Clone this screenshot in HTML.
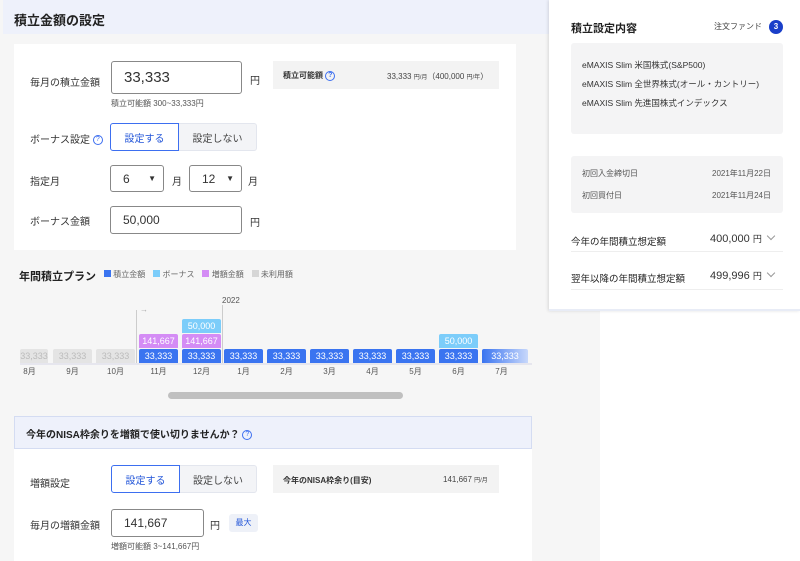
<!DOCTYPE html>
<html><head><meta charset="utf-8"><style>
*{box-sizing:border-box;margin:0;padding:0}
body{width:800px;height:561px;overflow:hidden;background:#fff;font-family:"Liberation Sans","Noto Sans CJK JP",sans-serif;color:#333;position:relative}
.abs{position:absolute}
.gray{left:0;top:0;width:600px;height:561px;background:#f6f6f6}
.hdr{left:3px;top:0;width:597px;height:34px;background:#eef1fb}
.card{background:#fff}
.lbl{font-size:10px;color:#333}
.inp{border:1px solid #888;border-radius:3px;background:#fff;font-size:12px;padding-left:12px;display:flex;align-items:center}
.seg{display:flex;font-size:10px}
.seg div{display:flex;align-items:center;justify-content:center;height:28px}
.on{border:1px solid #3d6ff0;color:#2255d8;border-radius:3px 0 0 3px;background:#fff}
.off{border:1px solid #e3e6ee;border-left:none;background:#f3f4f7;color:#444;border-radius:0 3px 3px 0}
.q{display:inline-block;width:10px;height:10px;border:1px solid #3d6ff0;border-radius:50%;font-size:7px;color:#3d6ff0;text-align:center;line-height:8px;vertical-align:middle}
.bar{position:absolute;height:14px;font-size:9px;color:#fff;text-align:center;line-height:14px;border-radius:2px 2px 0 0}
.b{background:#3a74f0}.c{background:#7ccdfa}.p{background:#d48cf5}.g{background:#e4e4e4;color:#bbb}
.m{position:absolute;top:366px;font-size:8px;color:#555;width:39px;text-align:center}
.chev{display:inline-block;width:6px;height:6px;border-right:1px solid #999;border-bottom:1px solid #999;transform:rotate(45deg);margin-left:6px;vertical-align:3px}
</style></head><body>
<div class="abs gray"></div>
<div class="abs hdr"></div>
<div class="abs" style="left:14px;top:10px;font-size:13px;font-weight:bold;color:#222">積立金額の設定</div>
<div class="abs card" style="left:14px;top:44px;width:502px;height:206px"></div>
<div class="abs lbl" style="left:30px;top:74px">毎月の積立金額</div>
<div class="abs inp" style="left:111px;top:61px;width:131px;height:33px;font-size:15px">33,333</div>
<div class="abs lbl" style="left:250px;top:72px">円</div>
<div class="abs" style="left:111px;top:98px;font-size:8px;color:#555">積立可能額 300~33,333円</div>
<div class="abs" style="left:273px;top:61px;width:226px;height:28px;background:#f3f3f3"></div>
<div class="abs" style="left:283px;top:70px;font-size:8px;font-weight:bold">積立可能額 <span class="q">?</span></div>
<div class="abs" style="left:387px;top:71px;font-size:8px;color:#444">33,333 <span style="font-size:6px">円/月</span>（400,000 <span style="font-size:6px">円/年</span>）</div>
<div class="abs lbl" style="left:30px;top:131px">ボーナス設定 <span class="q">?</span></div>
<div class="abs seg" style="left:110px;top:123px"><div class="on" style="width:69px">設定する</div><div class="off" style="width:78px">設定しない</div></div>
<div class="abs lbl" style="left:30px;top:173px">指定月</div>
<div class="abs inp" style="left:110px;top:165px;width:54px;height:27px">6<span style="margin-left:auto;margin-right:7px;font-size:8px">▼</span></div>
<div class="abs lbl" style="left:172px;top:173px">月</div>
<div class="abs inp" style="left:189px;top:165px;width:53px;height:27px">12<span style="margin-left:auto;margin-right:7px;font-size:8px">▼</span></div>
<div class="abs lbl" style="left:248px;top:173px">月</div>
<div class="abs lbl" style="left:30px;top:213px">ボーナス金額</div>
<div class="abs inp" style="left:110px;top:206px;width:132px;height:28px">50,000</div>
<div class="abs lbl" style="left:250px;top:214px">円</div>

<div class="abs" style="left:19px;top:268px;font-size:11px;font-weight:bold;color:#222">年間積立プラン</div>
<div class="abs" style="left:104px;top:269px;font-size:8px;color:#666;display:flex;gap:8px;align-items:center">
<span><i style="display:inline-block;width:7px;height:7px;background:#3a74f0"></i> 積立金額</span>
<span><i style="display:inline-block;width:7px;height:7px;background:#7ccdfa"></i> ボーナス</span>
<span><i style="display:inline-block;width:7px;height:7px;background:#d48cf5"></i> 増額金額</span>
<span><i style="display:inline-block;width:7px;height:7px;background:#d6d6d6"></i> 未利用額</span></div>
<div class="abs" style="left:222px;top:296px;font-size:8px;color:#555">2022</div>
<div class="abs" style="left:222px;top:305px;width:1px;height:58px;background:#ccc"></div>
<div class="abs" style="left:136px;top:310px;width:1px;height:53px;background:#ccc"></div>
<div class="abs" style="left:140px;top:305px;font-size:8px;color:#aaa">→</div>
<div class="bar g" style="left:20px;top:349px;width:28px">33,333</div>
<div class="bar g" style="left:53px;top:349px;width:39px">33,333</div>
<div class="bar g" style="left:96px;top:349px;width:39px">33,333</div>
<div class="bar b" style="left:139px;top:349px;width:39px">33,333</div>
<div class="bar p" style="left:139px;top:334px;width:39px">141,667</div>
<div class="bar b" style="left:182px;top:349px;width:39px">33,333</div>
<div class="bar p" style="left:182px;top:334px;width:39px">141,667</div>
<div class="bar c" style="left:182px;top:319px;width:39px">50,000</div>
<div class="bar b" style="left:224px;top:349px;width:39px">33,333</div>
<div class="bar b" style="left:267px;top:349px;width:39px">33,333</div>
<div class="bar b" style="left:310px;top:349px;width:39px">33,333</div>
<div class="bar b" style="left:353px;top:349px;width:39px">33,333</div>
<div class="bar b" style="left:396px;top:349px;width:39px">33,333</div>
<div class="bar b" style="left:439px;top:349px;width:39px">33,333</div>
<div class="bar c" style="left:439px;top:334px;width:39px">50,000</div>
<div class="bar" style="left:482px;top:349px;width:46px;background:linear-gradient(90deg,#3a74f0,#c8d8fb)">33,333</div>
<div class="abs" style="left:20px;top:363px;width:512px;height:2px;background:#e6e6ee"></div>
<div class="m" style="left:10px">8月</div><div class="m" style="left:53px">9月</div><div class="m" style="left:96px">10月</div><div class="m" style="left:139px">11月</div><div class="m" style="left:182px">12月</div><div class="m" style="left:224px">1月</div><div class="m" style="left:267px">2月</div><div class="m" style="left:310px">3月</div><div class="m" style="left:353px">4月</div><div class="m" style="left:396px">5月</div><div class="m" style="left:439px">6月</div><div class="m" style="left:482px">7月</div>
<div class="abs" style="left:168px;top:392px;width:235px;height:7px;border-radius:4px;background:#c0c0c0"></div>

<div class="abs" style="left:14px;top:416px;width:518px;height:33px;background:#eef1fb;border:1px solid #d4dcf2"></div>
<div class="abs" style="left:26px;top:426px;font-size:10px;font-weight:bold;color:#222">今年のNISA枠余りを増額で使い切りませんか？ <span class="q" style="font-weight:normal">?</span></div>
<div class="abs card" style="left:14px;top:449px;width:518px;height:112px"></div>
<div class="abs lbl" style="left:30px;top:475px">増額設定</div>
<div class="abs seg" style="left:111px;top:465px"><div class="on" style="width:69px">設定する</div><div class="off" style="width:77px">設定しない</div></div>
<div class="abs" style="left:273px;top:465px;width:226px;height:28px;background:#f3f3f3"></div>
<div class="abs" style="left:283px;top:475px;font-size:8px;font-weight:bold">今年のNISA枠余り(目安)</div>
<div class="abs" style="left:443px;top:475px;font-size:8px;color:#444">141,667 <span style="font-size:6px">円/月</span></div>
<div class="abs lbl" style="left:30px;top:517px">毎月の増額金額</div>
<div class="abs inp" style="left:111px;top:509px;width:93px;height:28px">141,667</div>
<div class="abs lbl" style="left:210px;top:517px">円</div>
<div class="abs" style="left:229px;top:514px;width:29px;height:18px;background:#eef1f8;border-radius:3px;font-size:8px;color:#2255d8;text-align:center;line-height:18px">最大</div>
<div class="abs" style="left:111px;top:541px;font-size:8px;color:#555">増額可能額 3~141,667円</div>

<div class="abs" style="left:549px;top:0;width:251px;height:311px;background:#fff;border-bottom:2px solid #e8ecf6;box-shadow:-1px 0 3px rgba(0,0,0,.12)"></div>
<div class="abs" style="left:571px;top:20px;font-size:11px;font-weight:bold;color:#222">積立設定内容</div>
<div class="abs" style="left:714px;top:21px;font-size:8px;color:#444">注文ファンド</div>
<div class="abs" style="left:769px;top:20px;width:14px;height:14px;border-radius:50%;background:#1a3fc9;color:#fff;font-size:8px;font-weight:bold;text-align:center;line-height:14px">3</div>
<div class="abs" style="left:571px;top:43px;width:212px;height:91px;background:#f4f4f5;border-radius:3px"></div>
<div class="abs" style="left:582px;top:56px;font-size:8.5px;line-height:19px;color:#333">eMAXIS Slim 米国株式(S&amp;P500)<br>eMAXIS Slim 全世界株式(オール・カントリー)<br>eMAXIS Slim 先進国株式インデックス</div>
<div class="abs" style="left:571px;top:156px;width:212px;height:57px;background:#f4f4f5;border-radius:3px"></div>
<div class="abs" style="left:582px;top:163px;font-size:8px;color:#555;line-height:22px">初回入金締切日<br>初回買付日</div>
<div class="abs" style="left:712px;top:163px;font-size:8px;color:#555;line-height:22px">2021年11月22日<br>2021年11月24日</div>
<div class="abs" style="left:571px;top:234px;font-size:9.5px;color:#222">今年の年間積立想定額</div>
<div class="abs" style="left:710px;top:232px;font-size:11px;color:#333">400,000 <span style="font-size:9px">円</span><span class="chev"></span></div>
<div class="abs" style="left:571px;top:251px;width:212px;height:1px;background:#eee"></div>
<div class="abs" style="left:571px;top:271px;font-size:9.5px;color:#222">翌年以降の年間積立想定額</div>
<div class="abs" style="left:710px;top:269px;font-size:11px;color:#333">499,996 <span style="font-size:9px">円</span><span class="chev"></span></div>
<div class="abs" style="left:571px;top:289px;width:212px;height:1px;background:#eee"></div>
</body></html>
